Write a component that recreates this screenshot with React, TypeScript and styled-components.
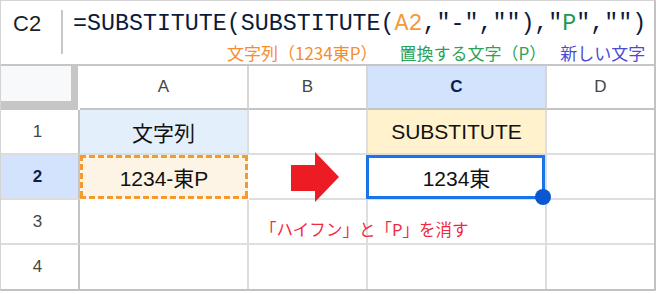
import { FC } from 'react';
import styled, { createGlobalStyle } from 'styled-components';

const GlobalStyle = createGlobalStyle`
  html, body {
    margin: 0;
    padding: 0;
    background: #ffffff;
  }
  * {
    box-sizing: border-box;
  }
`;

const SANS = `"Liberation Sans", Arial, "Noto Sans CJK JP", sans-serif`;
const MONO = `"Liberation Mono", "Courier New", monospace`;

const Frame = styled.div`
  width: 656px;
  border-top: 1px solid #d4d4d4;
  border-left: 1px solid #d4d4d4;
  border-right: 2px solid #c2c2c2;
  border-bottom: 2px solid #c2c2c2;
  background: #ffffff;
`;

const FormulaBar = styled.div`
  display: flex;
  height: 63px;
`;

const NameBox = styled.div`
  width: 60px;
  padding: 9px 0 0 12px;
  font-family: ${SANS};
  font-size: 22px;
  line-height: 28px;
  color: #1f1f1f;
`;

const Divider = styled.div`
  width: 2px;
  height: 44px;
  margin-top: 9px;
  background: #c8c8c8;
`;

const FormulaBody = styled.div`
  flex: 1;
  padding: 8px 0 0 10px;
`;

const Formula = styled.div`
  font-family: ${MONO};
  font-size: 23.3px;
  line-height: 30px;
  color: #0d1a3a;
  white-space: nowrap;
`;

const Token = styled.span<{ $color: string }>`
  color: ${p => p.$color};
`;

const Notes = styled.div`
  display: flex;
  margin-top: 4px;
  padding-left: 154px;
  font-family: "Noto Sans CJK JP", sans-serif;
  font-size: 17px;
  line-height: 20px;
  white-space: nowrap;
`;

const Note = styled.span<{ $color: string; $gap?: number }>`
  margin-left: ${p => p.$gap || 0}px;
  color: ${p => p.$color};
`;

const Sheet = styled.div`
  position: relative;
  display: grid;
  grid-template-columns: 79px 169px 119px 179px 107px;
  grid-template-rows: 44px 45px 45px 45px 44px;
  border-top: 2px solid #c6c6c6;
`;

const Corner = styled.div`
  background: #c6c6c6;
  border-right: 2px solid #ffffff;
`;

const CornerPane = styled.div`
  width: 70px;
  height: 35px;
  background: #f8f9fa;
`;

const ColHead = styled.div<{ $active?: boolean; $last?: boolean }>`
  display: flex;
  align-items: center;
  justify-content: center;
  background: ${p => (p.$active ? '#d3e3fd' : '#ffffff')};
  border-right: ${p => (p.$last ? 'none' : '2px solid #d6d6d6')};
  border-bottom: 2px solid #c4c4c4;
  font-family: ${SANS};
  font-size: 17px;
  font-weight: ${p => (p.$active ? 700 : 400)};
  color: ${p => (p.$active ? '#0b1d51' : '#444746')};
`;

const RowHead = styled.div<{ $active?: boolean; $last?: boolean }>`
  display: flex;
  align-items: center;
  justify-content: center;
  padding-right: 4px;
  background: ${p => (p.$active ? '#d3e3fd' : '#ffffff')};
  border-right: 2px solid #c4c4c4;
  border-bottom: ${p => (p.$last ? 'none' : '2px solid #dcdcdc')};
  font-family: ${SANS};
  font-size: 17px;
  font-weight: ${p => (p.$active ? 700 : 400)};
  color: ${p => (p.$active ? '#0b1d51' : '#444746')};
`;

const Cell = styled.div<{ $fill?: string; $lastCol?: boolean; $lastRow?: boolean }>`
  position: relative;
  display: flex;
  align-items: center;
  justify-content: center;
  background: ${p => p.$fill || '#ffffff'};
  border-right: ${p => (p.$lastCol ? 'none' : '2px solid #dedede')};
  border-bottom: ${p => (p.$lastRow ? 'none' : '2px solid #dedede')};
  font-family: ${SANS};
  font-size: 21px;
  color: #111111;
`;

const dash = (dir: string) =>
  `repeating-linear-gradient(${dir}, #f59a2c 0 6px, transparent 6px 9px)`;

const CopiedCell = styled(Cell)`
  border: none;
  margin: 0 1px 1px 0;
  background:
    ${dash('90deg')} top left / 100% 3px no-repeat,
    ${dash('90deg')} bottom left / 100% 3px no-repeat,
    ${dash('180deg')} top left / 3px 100% no-repeat,
    ${dash('180deg')} top right / 3px 100% no-repeat,
    #fdf4e6;
`;

const ActiveCell = styled(Cell)`
  z-index: 2;
`;

const Selection = styled.div`
  position: absolute;
  top: 0;
  right: 0;
  bottom: -1px;
  left: -2px;
  border: 3px solid #1a73e8;
  pointer-events: none;
`;

const FillHandle = styled.div`
  position: absolute;
  right: -9px;
  bottom: -9px;
  width: 16px;
  height: 16px;
  border-radius: 50%;
  background: #0b57d0;
`;

const Arrow = styled.svg`
  position: absolute;
  left: 290px;
  top: 86px;
`;

const Caption = styled.div`
  position: absolute;
  left: 259px;
  top: 151px;
  font-family: "Noto Sans CJK JP", sans-serif;
  font-size: 16.5px;
  line-height: 24px;
  color: #ee2a3f;
  white-space: nowrap;
`;

const DARK = '#0d1a3a';
const ORANGE = '#f59a3c';
const GREEN = '#1e9a4e';

const App: FC = () => (
  <>
    <GlobalStyle />
    <Frame>
      <FormulaBar>
        <NameBox>C2</NameBox>
        <Divider />
        <FormulaBody>
          <Formula>
            <Token $color={DARK}>=SUBSTITUTE(SUBSTITUTE(</Token>
            <Token $color={ORANGE}>A2</Token>
            <Token $color={DARK}>,"-",""),"</Token>
            <Token $color={GREEN}>P</Token>
            <Token $color={DARK}>",""</Token>
            <Token $color={DARK}>)</Token>
          </Formula>
          <Notes>
            <Note $color="#f58d2e">文字列（1234東P）</Note>
            <Note $color="#2aa35a" $gap={22}>置換する文字（P）</Note>
            <Note $color="#4b4bd3" $gap={14}>新しい文字</Note>
          </Notes>
        </FormulaBody>
      </FormulaBar>

      <Sheet>
        <Corner>
          <CornerPane />
        </Corner>
        <ColHead>A</ColHead>
        <ColHead>B</ColHead>
        <ColHead $active>C</ColHead>
        <ColHead $last>D</ColHead>

        <RowHead>1</RowHead>
        <Cell $fill="#e3effb">文字列</Cell>
        <Cell />
        <Cell $fill="#fff2cc">SUBSTITUTE</Cell>
        <Cell $lastCol />

        <RowHead $active>2</RowHead>
        <CopiedCell>1234-東P</CopiedCell>
        <Cell />
        <ActiveCell>
          1234東
          <Selection>
            <FillHandle />
          </Selection>
        </ActiveCell>
        <Cell $lastCol />

        <RowHead>3</RowHead>
        <Cell />
        <Cell />
        <Cell />
        <Cell $lastCol />

        <RowHead $last>4</RowHead>
        <Cell $lastRow />
        <Cell $lastRow />
        <Cell $lastRow />
        <Cell $lastRow $lastCol />

        <Arrow width="48" height="50" viewBox="0 0 48 50">
          <polygon points="0,13 24,13 24,0 48,25 24,50 24,39 0,39" fill="#ed1c24" />
        </Arrow>
        <Caption>「ハイフン」と「P」を消す</Caption>
      </Sheet>
    </Frame>
  </>
);

export default App;
